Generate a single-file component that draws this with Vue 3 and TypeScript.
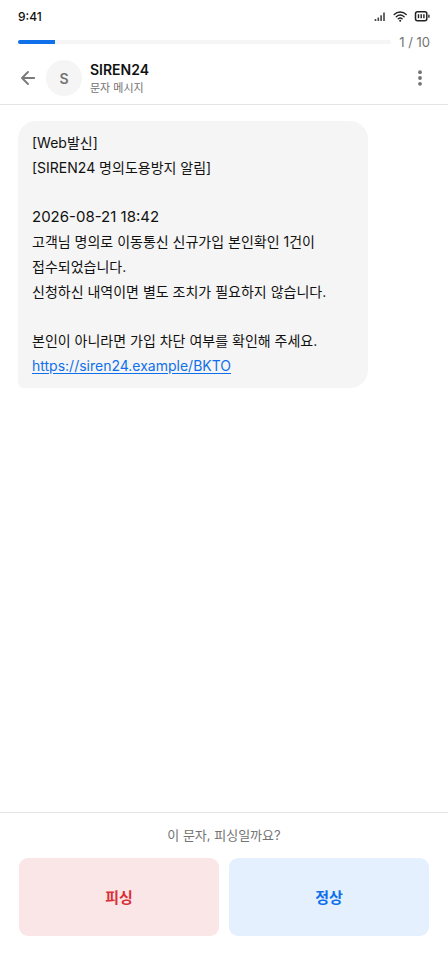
<script setup lang="ts">
import { computed, ref } from 'vue'

type Verdict = 'phishing' | 'normal'

const current = ref(1)
const total = 10
const verdict = ref<Verdict | null>(null)
const progress = computed(() => `${(current.value / total) * 100}%`)

const sender = { name: 'SIREN24', initial: 'S', kind: '문자 메시지' }

const heading = ['[Web발신]', '[SIREN24 명의도용방지 알림]']
const sentAt = '2026-08-21 18:42'
const body = [
  '고객님 명의로 이동통신 신규가입 본인확인 1건이 접수되었습니다.',
  '신청하신 내역이면 별도 조치가 필요하지 않습니다.',
]
const closing = '본인이 아니라면 가입 차단 여부를 확인해 주세요.'
const link = 'https://siren24.example/BKTO'

const choices: { id: Verdict; label: string }[] = [
  { id: 'phishing', label: '피싱' },
  { id: 'normal', label: '정상' },
]
</script>

<template>
  <div class="screen">
    <div class="status">
      <time class="clock">9:41</time>
      <div class="indicators">
        <svg width="12" height="12" viewBox="0 0 12 12" aria-hidden="true">
          <path d="M1.5 9v2M4.3 7.5V11M7.1 5.2V11M10 2.4V11" fill="none" stroke="#444" stroke-width="1.6" />
        </svg>
        <svg width="14" height="12" viewBox="0 0 14 12" aria-hidden="true">
          <path d="M1.2 4.4C4.6 1.2 9.8 1.2 13.2 4.4M3.3 6.7c2.3-2 5.5-2 7.8 0M5.3 8.8c1.2-.9 2.6-.9 3.8 0" fill="none" stroke="#222" stroke-width="1.4" stroke-linecap="round" />
          <circle cx="7.2" cy="10.7" r="1" fill="#222" />
        </svg>
        <svg width="16" height="12" viewBox="0 0 16 12" aria-hidden="true">
          <rect x="1.5" y="1.7" width="11.3" height="9" rx="2" fill="none" stroke="#222" stroke-width="1.5" />
          <path d="M4.5 4.2v4M7.2 4.2v4M9.9 4.2v4" stroke="#222" stroke-width="1.4" />
          <path d="M14.9 4.7v3" stroke="#222" stroke-width="1.3" />
        </svg>
      </div>
    </div>

    <div class="progress">
      <div class="track" role="progressbar" aria-label="진행" :aria-valuenow="current" aria-valuemin="0" :aria-valuemax="total">
        <div class="fill" :style="{ width: progress }"></div>
      </div>
      <span class="count">{{ current }} / {{ total }}</span>
    </div>

    <header class="header">
      <button class="icon-button" type="button" aria-label="뒤로">
        <svg width="20" height="20" viewBox="0 0 20 20" aria-hidden="true">
          <path d="M16.2 10H4.2M10 4L4 10l6 6" fill="none" stroke="#7a7a7a" stroke-width="1.9" stroke-linecap="round" stroke-linejoin="round" />
        </svg>
      </button>
      <div class="avatar" aria-hidden="true">{{ sender.initial }}</div>
      <div class="who">
        <h1 class="name">{{ sender.name }}</h1>
        <p class="kind">{{ sender.kind }}</p>
      </div>
      <button class="icon-button" type="button" aria-label="더보기">
        <svg width="20" height="20" viewBox="0 0 20 20" fill="#737373" aria-hidden="true">
          <circle cx="10" cy="4.2" r="1.9" />
          <circle cx="10" cy="10" r="1.9" />
          <circle cx="10" cy="15.8" r="1.9" />
        </svg>
      </button>
    </header>

    <main class="thread">
      <article class="bubble">
        <div>
          <p v-for="line in heading" :key="line" class="line">{{ line }}</p>
        </div>
        <div>
          <p class="line sent-at">{{ sentAt }}</p>
          <p v-for="line in body" :key="line" class="line">{{ line }}</p>
        </div>
        <div>
          <p class="line">{{ closing }}</p>
          <p class="line"><a class="link" :href="link" @click.prevent>{{ link }}</a></p>
        </div>
      </article>
    </main>

    <footer class="answer">
      <p class="question">이 문자, 피싱일까요?</p>
      <div class="choices">
        <button
          v-for="choice in choices"
          :key="choice.id"
          type="button"
          class="choice"
          :class="choice.id"
          :aria-pressed="verdict === choice.id"
          @click="verdict = choice.id"
        >
          {{ choice.label }}
        </button>
      </div>
    </footer>
  </div>
</template>

<style>
body {
  margin: 0;
  background: #fff;
}
</style>

<style scoped>
.screen {
  display: flex;
  flex-direction: column;
  min-height: 100vh;
  box-sizing: border-box;
  background: #fff;
  color: #111;
  font-family: Inter, 'Noto Sans CJK KR', sans-serif;
}
h1,
p {
  margin: 0;
}
button {
  border: 0;
  font-family: inherit;
  cursor: pointer;
}
.status {
  display: flex;
  align-items: center;
  justify-content: space-between;
  height: 32px;
  padding: 0 18px;
}
.clock {
  font-size: 12px;
  font-weight: 500;
}
.indicators {
  display: flex;
  align-items: center;
  gap: 7px;
}
.progress {
  display: flex;
  align-items: center;
  gap: 8px;
  height: 20px;
  padding: 0 18px;
}
.track {
  flex: 1;
  height: 4px;
  border-radius: 2px;
  background: #f5f5f5;
  overflow: hidden;
}
.fill {
  height: 100%;
  background: #0f70ea;
}
.count {
  font-size: 13px;
  line-height: 20px;
  color: #737373;
}
.header {
  display: flex;
  align-items: center;
  gap: 8px;
  padding: 8px 18px;
  border-bottom: 1px solid #e5e5e5;
}
.icon-button {
  display: flex;
  padding: 0;
  background: none;
}
.avatar {
  display: flex;
  align-items: center;
  justify-content: center;
  width: 36px;
  height: 36px;
  border-radius: 50%;
  background: #f5f5f5;
  color: #737373;
  font-size: 14px;
  font-weight: 600;
}
.who {
  flex: 1;
}
.name {
  font-size: 14px;
  font-weight: 600;
  line-height: 20px;
}
.kind {
  font-size: 11px;
  line-height: 16px;
  color: #737373;
}
.thread {
  flex: 1;
  padding: 16px 18px;
}
.bubble {
  display: flex;
  flex-direction: column;
  gap: 24px;
  box-sizing: border-box;
  width: 85%;
  padding: 9px 14px 10px;
  border-radius: 18px 18px 18px 6px;
  background: #f5f5f5;
  font-size: 14px;
  line-height: 25px;
}
.line {
  word-break: keep-all;
}
.sent-at {
  font-size: 15px;
}
.link {
  color: #0f70ea;
  text-decoration: underline;
  text-underline-offset: 2px;
}
.answer {
  display: flex;
  flex-direction: column;
  gap: 13px;
  padding: 12px 19px 17px;
  border-top: 1px solid #e5e5e5;
}
.question {
  font-size: 13px;
  line-height: 20px;
  text-align: center;
  color: #737373;
}
.choices {
  display: grid;
  grid-template-columns: 1fr 1fr;
  gap: 10px;
}
.choice {
  height: 78px;
  padding: 0 0 2px;
  border-radius: 9px;
  font-size: 15px;
  font-weight: 700;
}
.phishing {
  background: #fbe6e7;
  color: #d9303a;
}
.normal {
  background: #e4f0fd;
  color: #0f70ea;
}
</style>
